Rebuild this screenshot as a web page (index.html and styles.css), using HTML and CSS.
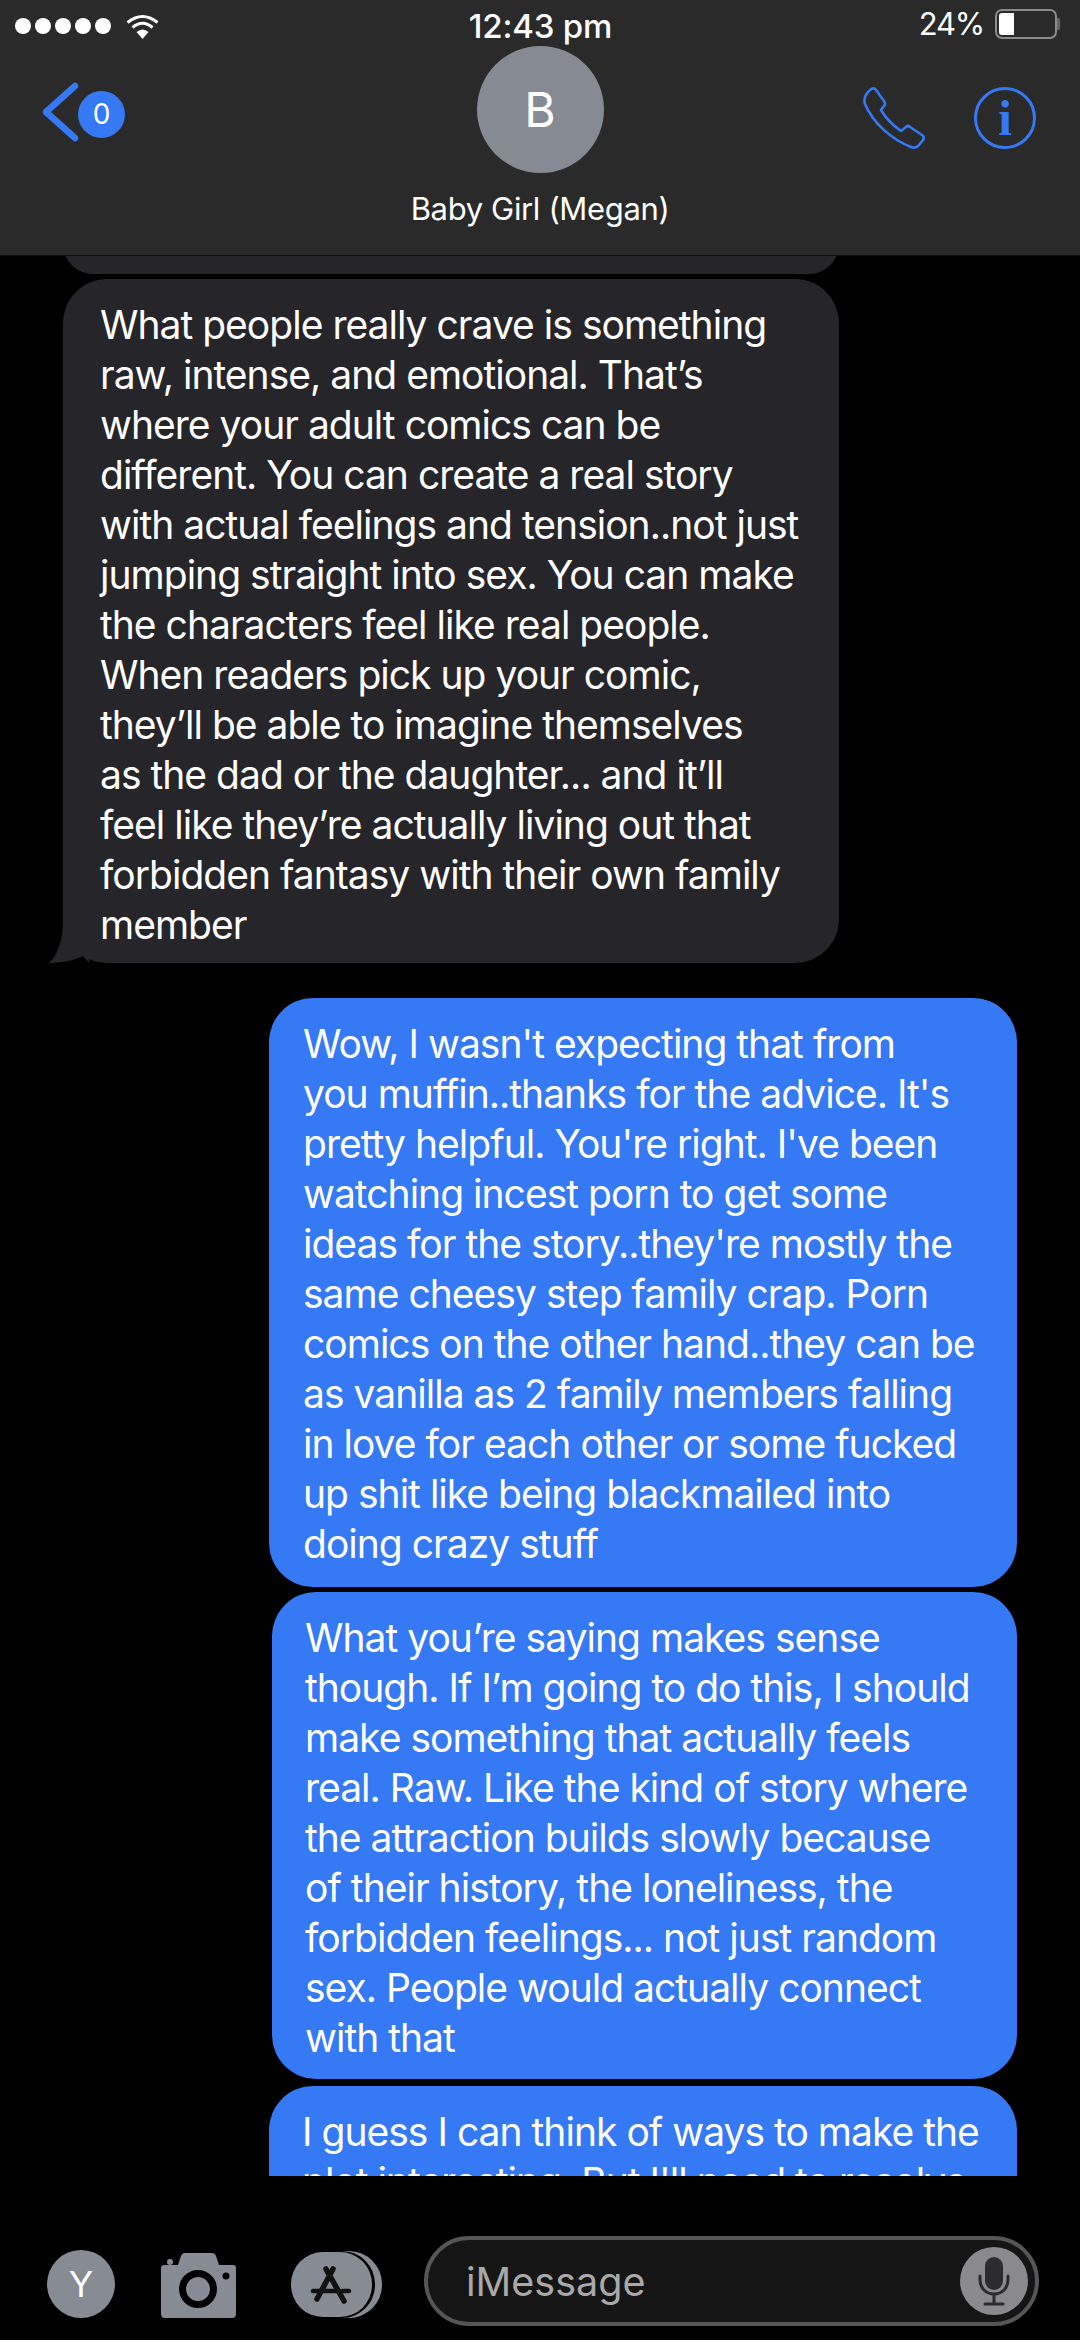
FILE: index.html
```html
<!DOCTYPE html>
<html lang="en">
<head>
  <meta charset="UTF-8">
  <meta name="viewport" content="width=device-width, initial-scale=1.0">
  <link rel="stylesheet" href="styles.css">
  <title>Baby Girl (Megan)</title>
</head>
<body>
  <header class="top">
    <div class="status">
      <div class="status-left">
        <span class="dot"></span><span class="dot"></span><span class="dot"></span><span class="dot"></span><span class="dot"></span>
        <svg class="wifi" width="33" height="25" viewBox="0 0 33 25">
          <path d="M1.5 8.5Q16.5 -3.5 31.5 8.5" fill="none" stroke="#fff" stroke-width="3"/>
          <path d="M6.5 13.5Q16.5 5 26.5 13.5" fill="none" stroke="#fff" stroke-width="3"/>
          <path d="M16.5 25L10.5 18Q16.5 13 22.5 18Z" fill="#fff"/>
        </svg>
      </div>
      <div class="time">12:43 pm</div>
      <div class="status-right">
        <span class="pct">24%</span>
        <span class="battery"><span class="battery-fill"></span></span>
        <span class="battery-nub"></span>
      </div>
    </div>
    <div class="nav">
      <div class="back">
        <svg width="37" height="60" viewBox="0 0 37 60">
          <path d="M33 4L4 30L33 56" fill="none" stroke="#3579f4" stroke-width="6.5" stroke-linecap="round" stroke-linejoin="round"/>
        </svg>
        <span class="badge">0</span>
      </div>
      <div class="contact">
        <div class="avatar">B</div>
        <div class="name">Baby Girl (Megan)</div>
      </div>
      <div class="actions">
        <svg width="62" height="62" viewBox="0 0 62 62">
          <path d="M5 5Q10 -1 13 3L21 14Q23 17 21 19L18 23Q25 35 38 44L43 40Q45 38 47 40L59 48Q62 50 60 53L56 58Q53 62 48 60C28 52 10 36 2 17Q0 11 5 5Z" fill="none" stroke="#3579f4" stroke-width="2.6" stroke-linejoin="round"/>
        </svg>
        <span class="info">i</span>
      </div>
    </div>
  </header>

  <main class="messages">
    <div class="bubble in prev">
      <span class="speck speck-a"></span>
      <span class="speck speck-b"></span>
    </div>
    <div class="bubble in long">
      What people really crave is something<br>
      raw, intense, and emotional. That’s<br>
      where your adult comics can be<br>
      different. You can create a real story<br>
      with actual feelings and tension..not just<br>
      jumping straight into sex. You can make<br>
      the characters feel like real people.<br>
      When readers pick up your comic,<br>
      they’ll be able to imagine themselves<br>
      as the dad or the daughter... and it’ll<br>
      feel like they’re actually living out that<br>
      forbidden fantasy with their own family<br>
      member
      <svg class="tail" width="40" height="50" viewBox="0 0 40 50">
        <path d="M14 0C15 20 11 40 0 50C14 50 26 47 34 43L40 50L40 0Z" fill="#26252a"/>
      </svg>
    </div>
    <div class="bubble out first">
      Wow, I wasn't expecting that from<br>
      you muffin..thanks for the advice. It's<br>
      pretty helpful. You're right. I've been<br>
      watching incest porn to get some<br>
      ideas for the story..they're mostly the<br>
      same cheesy step family crap. Porn<br>
      comics on the other hand..they can be<br>
      as vanilla as 2 family members falling<br>
      in love for each other or some fucked<br>
      up shit like being blackmailed into<br>
      doing crazy stuff
    </div>
    <div class="bubble out second">
      What you’re saying makes sense<br>
      though. If I’m going to do this, I should<br>
      make something that actually feels<br>
      real. Raw. Like the kind of story where<br>
      the attraction builds slowly because<br>
      of their history, the loneliness, the<br>
      forbidden feelings... not just random<br>
      sex. People would actually connect<br>
      with that
    </div>
    <div class="bubble out third">
      I guess I can think of ways to make the<br>
      plot interesting. But I'll need to resolve
    </div>
  </main>

  <footer class="compose">
    <div class="tools">
      <div class="me">Y</div>
      <svg class="camera" width="75" height="65" viewBox="0 0 75 65">
        <path d="M24 0H51Q54 0 55 3L58 12H72Q75 12 75 15V61Q75 65 71 65H4Q0 65 0 61V15Q0 12 3 12H17L20 3Q21 0 24 0Z" fill="#868b94"/>
        <circle cx="37" cy="36" r="15.5" fill="none" stroke="#000" stroke-width="7"/>
        <circle cx="65" cy="23" r="3.5" fill="#000"/>
        <circle cx="9" cy="9" r="3" fill="#868b94"/>
      </svg>
      <svg class="apps" width="91" height="67" viewBox="0 0 91 67">
        <rect x="9" y="0" width="82" height="67" rx="33" fill="#868b94"/>
        <rect x="0" y="0" width="84" height="67" rx="33" fill="#000"/>
        <rect x="0" y="1" width="81" height="65" rx="32" fill="#868b94"/>
        <path d="M42 18L26 48M35 18L53 50" fill="none" stroke="#111" stroke-width="5.5" stroke-linecap="round"/>
        <path d="M22 40H46M51 40H58" fill="none" stroke="#111" stroke-width="4.5" stroke-linecap="round"/>
      </svg>
    </div>
    <div class="field">
      <span class="placeholder">iMessage</span>
      <span class="mic">
        <svg width="32" height="50" viewBox="0 0 32 50">
          <rect x="7" y="1" width="18" height="33" rx="9" fill="#2c2c2e"/>
          <path d="M2 20V24C2 32 8 38 16 38C24 38 30 32 30 24V20M16 38V47M7 48H25" fill="none" stroke="#2c2c2e" stroke-width="3" stroke-linecap="round"/>
        </svg>
      </span>
    </div>
  </footer>
</body>
</html>
```

FILE: styles.css
```css
* {
  box-sizing: border-box;
}
html, body {
  margin: 0;
  padding: 0;
}
body {
  width: 1080px;
  height: 2340px;
  overflow: hidden;
  background: #000;
  color: #fff;
  font-family: Inter, "Noto Sans", sans-serif;
}

/* header */
.top {
  height: 256px;
  background: #2a2a2b;
  border-bottom: 1px solid #0c0c0c;
}
.status {
  height: 46px;
  padding: 9px 20px 0 15px;
  display: grid;
  grid-template-columns: 1fr auto 1fr;
  font-size: 31px;
  line-height: 34px;
}
.status-left {
  display: flex;
  align-items: center;
  gap: 4px;
  height: 34px;
}
.dot {
  width: 16px;
  height: 16px;
  border-radius: 50%;
  background: #fff;
}
.wifi {
  margin-left: 11px;
}
.time {
  padding-left: 6px;
  font-size: 33px;
  font-weight: 500;
  letter-spacing: -0.2px;
}
.status-right {
  display: flex;
  justify-content: flex-end;
  align-items: center;
  height: 30px;
}
.pct {
  margin-right: 11px;
  letter-spacing: -1.2px;
}
.battery {
  width: 62px;
  height: 30px;
  border: 2px solid #8a8a8a;
  border-radius: 7px;
  padding: 2px;
}
.battery-fill {
  display: block;
  width: 15px;
  height: 100%;
  background: #fff;
  border-radius: 3px 0 0 3px;
}
.battery-nub {
  width: 3px;
  height: 12px;
  background: #666;
  border-radius: 0 2px 2px 0;
}
.nav {
  display: grid;
  grid-template-columns: 1fr auto 1fr;
}
.back {
  padding: 36px 0 0 42px;
  display: flex;
  align-items: flex-start;
}
.badge {
  width: 47px;
  height: 47px;
  margin: 9px 0 0 -1px;
  border-radius: 50%;
  background: #3579f4;
  font-size: 28px;
  line-height: 47px;
  text-align: center;
}
.contact {
  width: 254px;
  display: flex;
  flex-direction: column;
  align-items: center;
}
.avatar {
  width: 127px;
  height: 127px;
  border-radius: 50%;
  background: #868a93;
  font-size: 48px;
  line-height: 127px;
  text-align: center;
}
.name {
  margin-top: 16px;
  font-size: 31px;
  line-height: 40px;
  letter-spacing: -0.35px;
  white-space: nowrap;
}
.actions {
  display: flex;
  justify-content: flex-end;
  align-items: flex-start;
  gap: 49px;
  padding: 41px 44px 0 0;
}
.info {
  width: 62px;
  height: 62px;
  border: 3px solid #3579f4;
  border-radius: 50%;
  color: #3579f4;
  font-family: "Liberation Serif", serif;
  font-size: 50px;
  font-weight: 700;
  line-height: 56px;
  text-align: center;
}

/* messages */
.messages {
  height: 1920px;
  overflow: hidden;
  display: flex;
  flex-direction: column;
  align-items: flex-start;
}
.bubble {
  position: relative;
  flex: none;
  padding: 21px 0 18px;
  border-radius: 44px;
  font-size: 39px;
  line-height: 50px;
  letter-spacing: -0.98px;
  white-space: nowrap;
}
.in {
  margin-left: 63px;
  width: 776px;
  padding-left: 37px;
  background: #26252a;
}
.prev {
  height: 60px;
  margin-top: -42px;
}
.speck {
  position: absolute;
  top: 41px;
  width: 10px;
  height: 1px;
  background: #ddd;
}
.speck-a {
  left: 48px;
}
.speck-b {
  left: 224px;
}
.long {
  margin-top: 5px;
  padding-bottom: 13px;
}
.tail {
  position: absolute;
  left: -14px;
  bottom: 0;
}
.out {
  align-self: flex-end;
  margin-right: 63px;
  background: #3579f4;
}
.first {
  width: 748px;
  margin-top: 35px;
  padding-left: 34px;
}
.second {
  width: 745px;
  margin-top: 5px;
  padding-left: 33px;
  padding-bottom: 16px;
}
.third {
  width: 748px;
  margin-top: 7px;
  padding-left: 33px;
}

/* compose bar */
.compose {
  display: flex;
  align-items: flex-start;
  padding: 60px 0 0 47px;
}
.tools {
  display: flex;
  align-items: center;
  margin-top: 14px;
}
.me {
  width: 68px;
  height: 68px;
  border-radius: 50%;
  background: #868b94;
  font-size: 36px;
  line-height: 68px;
  text-align: center;
}
.camera {
  margin: 3px 0 0 46px;
}
.apps {
  margin-left: 55px;
}
.field {
  width: 615px;
  height: 90px;
  margin-left: 42px;
  padding: 0 7px 0 38px;
  display: flex;
  justify-content: space-between;
  align-items: center;
  background: #151515;
  border: 4px solid #565656;
  border-radius: 45px;
}
.placeholder {
  color: #a9a9a9;
  font-size: 39.5px;
  margin-top: 2px;
}
.mic {
  width: 68px;
  height: 68px;
  border-radius: 50%;
  background: #8a8a8e;
  display: flex;
  align-items: center;
  justify-content: center;
}
```
